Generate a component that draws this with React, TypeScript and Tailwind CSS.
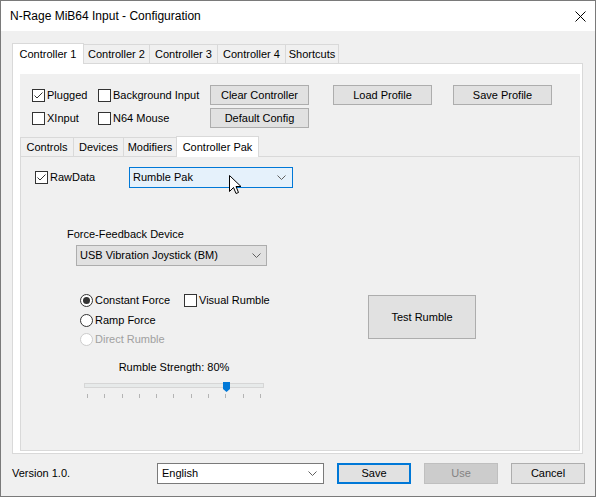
import React from "react";

type Opt = { label: string; checked?: boolean; className?: string };

const Chevron = () => (
  <svg width="9" height="5" viewBox="0 0 9 5" className="shrink-0">
    <path d="M0.5 0.5 L4.5 4.5 L8.5 0.5" stroke="#606060" fill="none" strokeWidth="1" />
  </svg>
);

const CheckBox = ({ label, checked, className = "" }: Opt) => (
  <label className={`flex items-center gap-[2px] ${className}`}>
    <span className="flex h-[13px] w-[13px] shrink-0 items-center justify-center border border-[#333333] bg-white">
      {checked && (
        <svg width="11" height="11" viewBox="0 0 11 11">
          <path d="M1.5 5.5 L4 8 L9.5 2.5" stroke="#333333" fill="none" strokeWidth="1" />
        </svg>
      )}
    </span>
    <span className="whitespace-nowrap">{label}</span>
  </label>
);

const Radio = ({ label, checked, disabled }: Opt & { disabled?: boolean }) => (
  <label className={`flex items-center gap-[2px] ${disabled ? "text-[#a0a0a0]" : ""}`}>
    <span
      className={`flex h-[13px] w-[13px] shrink-0 items-center justify-center rounded-full border bg-white ${
        disabled ? "border-[#cccccc]" : "border-[#333333]"
      }`}
    >
      {checked && <span className="h-[7px] w-[7px] rounded-full bg-[#333333]" />}
    </span>
    <span className="whitespace-nowrap">{label}</span>
  </label>
);

const Btn = ({ label, className = "" }: { label: string; className?: string }) => (
  <button className={`flex items-center justify-center border border-[#adadad] bg-[#e1e1e1] ${className}`}>
    {label}
  </button>
);

const OuterTabs = () => (
  <div className="flex h-[21px] items-end">
    <div className="relative z-10 -mb-px flex h-[21px] w-[72px] items-center justify-center border border-b-0 border-[#d9d9d9] bg-white">
      Controller 1
    </div>
    <div className="-ml-px flex h-[19px] w-[67px] items-center justify-center border border-b-0 border-[#d9d9d9]">Controller 2</div>
    <div className="-ml-px flex h-[19px] w-[69px] items-center justify-center border border-b-0 border-[#d9d9d9]">Controller 3</div>
    <div className="-ml-px flex h-[19px] w-[69px] items-center justify-center border border-b-0 border-[#d9d9d9]">Controller 4</div>
    <div className="-ml-px flex h-[19px] w-[54px] items-center justify-center border border-b-0 border-[#d9d9d9]">Shortcuts</div>
  </div>
);

const InnerTabs = () => (
  <div className="mt-[7px] flex h-[21px] items-end">
    <div className="flex h-[19px] w-[54px] items-center justify-center border border-b-0 border-[#d9d9d9]">Controls</div>
    <div className="-ml-px flex h-[19px] w-[51px] items-center justify-center border border-b-0 border-[#d9d9d9]">Devices</div>
    <div className="-ml-px flex h-[19px] w-[54px] items-center justify-center border border-b-0 border-[#d9d9d9]">Modifiers</div>
    <div className="relative z-10 -mb-px -ml-px flex h-[21px] w-[83px] items-center justify-center border border-b-0 border-[#d9d9d9] bg-white">
      Controller Pak
    </div>
  </div>
);

// standard arrow pointer hovering over the pak selector
const Pointer = () => (
  <svg width="13" height="20" viewBox="0 0 13 20" className="absolute left-[99px] top-[7px]">
    <path
      d="M0.5 0.5 L0.5 16.5 L4.5 12.5 L7 18.5 L9.5 17.5 L7 11.5 L12 11.5 Z"
      fill="#ffffff"
      stroke="#000000"
      strokeWidth="1"
      strokeLinejoin="miter"
    />
  </svg>
);

const ticks = Array.from({ length: 11 }, (_, i) => i);

const StrengthSlider = ({ value }: { value: number }) => (
  <div className="ml-[4px] mt-[12px] w-[180px]">
    <div className="h-[14px] text-center leading-[14px]">Rumble Strength: {value}%</div>
    <div className="relative mt-[9px] h-[5px] border border-[#d6d6d6] bg-[#e7eaea]">
      <svg width="7" height="10" viewBox="0 0 7 10" className="absolute left-[138px] top-[-2px]">
        <path d="M0 0 H7 V7 L3.5 10 L0 7 Z" fill="#0078d7" />
      </svg>
    </div>
    <div className="mt-[6px] flex justify-between px-[3px]">
      {ticks.map((t) => (
        <span key={t} className="h-[4px] w-px bg-[#b4b4b4]" />
      ))}
    </div>
  </div>
);

const ControllerPak = () => (
  <div className="flex flex-1 flex-col border border-[#d9d9d9] bg-[#f0f0f0]">
    <div className="mt-[10px] flex h-[21px] items-center pl-[14px]">
      <CheckBox label="RawData" checked className="w-[94px]" />
      <div className="relative flex h-[21px] w-[164px] items-center justify-between border border-[#0078d7] bg-[#e5f1fb] pl-[3px] pr-[6px]">
        <span>Rumble Pak</span>
        <Chevron />
        <Pointer />
      </div>
    </div>

    <div className="mt-[39px] h-[14px] pl-[46px] leading-[14px]">Force-Feedback Device</div>
    <div className="ml-[55px] mt-[4px] flex h-[21px] w-[191px] items-center justify-between border border-[#adadad] bg-[#e1e1e1] pl-[3px] pr-[5px]">
      <span>USB Vibration Joystick (BM)</span>
      <Chevron />
    </div>

    <div className="mt-[24px] flex">
      <div className="w-[347px] pl-[59px]">
        <div className="flex h-[20px] items-center">
          <div className="w-[104px]">
            <Radio label="Constant Force" checked />
          </div>
          <CheckBox label="Visual Rumble" />
        </div>
        <div className="flex h-[20px] items-center">
          <Radio label="Ramp Force" />
        </div>
        <div className="flex h-[18px] items-center">
          <Radio label="Direct Rumble" disabled />
        </div>
        <StrengthSlider value={80} />
      </div>
      <Btn label="Test Rumble" className="mt-[5px] h-[44px] w-[108px]" />
    </div>
  </div>
);

export default function App() {
  return (
    <div className="flex h-[497px] w-[596px] flex-col border border-[#7a7a7a] bg-[#f0f0f0] font-['Liberation_Sans',Arial,sans-serif] text-[11px] text-black">
      {/* title bar */}
      <div className="flex h-[30px] shrink-0 items-center justify-between bg-white pl-[9px] pr-[9px]">
        <span className="text-[12px]">N-Rage MiB64 Input - Configuration</span>
        <svg width="11" height="11" viewBox="0 0 11 11">
          <path d="M0.5 0.5 L10.5 10.5 M10.5 0.5 L0.5 10.5" stroke="#000" strokeWidth="1" />
        </svg>
      </div>

      <div className="pl-[11px] pr-[12px] pt-[11px]">
        <OuterTabs />
        <div className="flex h-[391px] flex-col border border-[#d9d9d9] bg-white pb-[2px] pl-[7px] pr-[2px] pt-[10px]">
          <div className="flex flex-1 flex-col bg-[#f0f0f0]">
            <div className="mt-[11px] flex h-[20px] items-center pl-[12px]">
              <CheckBox label="Plugged" checked className="w-[66px]" />
              <CheckBox label="Background Input" className="w-[112px]" />
              <Btn label="Clear Controller" className="h-[20px] w-[99px]" />
              <Btn label="Load Profile" className="ml-[24px] h-[20px] w-[99px]" />
              <Btn label="Save Profile" className="ml-[21px] h-[20px] w-[99px]" />
            </div>
            <div className="mt-[3px] flex h-[20px] items-center pl-[12px]">
              <CheckBox label="XInput" className="w-[66px]" />
              <CheckBox label="N64 Mouse" className="w-[112px]" />
              <Btn label="Default Config" className="h-[20px] w-[99px]" />
            </div>
            <InnerTabs />
            <ControllerPak />
          </div>
        </div>
      </div>

      {/* footer */}
      <div className="mt-[8px] flex h-[22px] items-center pl-[11px]">
        <span className="w-[145px]">Version 1.0.</span>
        <div className="flex h-[21px] w-[167px] items-center justify-between border border-[#7a7a7a] bg-white pl-[4px] pr-[6px]">
          <span>English</span>
          <Chevron />
        </div>
        <button className="ml-[13px] flex h-[21px] w-[74px] items-center justify-center border-2 border-[#0078d7] bg-[#e1e1e1]">
          Save
        </button>
        <button className="ml-[13px] flex h-[21px] w-[74px] items-center justify-center border border-[#bfbfbf] bg-[#cccccc] text-[#838383]">
          Use
        </button>
        <Btn label="Cancel" className="ml-[13px] h-[21px] w-[74px]" />
      </div>
    </div>
  );
}
